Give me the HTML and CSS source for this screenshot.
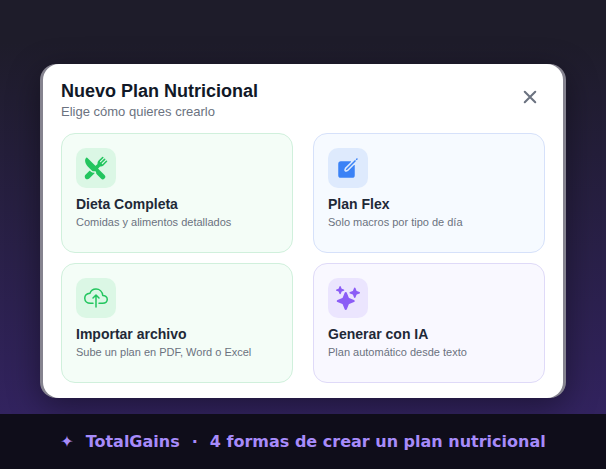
FILE: index.html
```html
<!DOCTYPE html>
<html lang="es">

<head>
    <meta charset="UTF-8">
    <meta name="viewport" content="width=device-width, initial-scale=1.0">
    <title>Nuevo Plan Nutricional</title>
    <link rel="stylesheet" href="styles.css">
</head>

<body>
    <main class="stage">
        <div class="modal-frame">
            <section class="modal" role="dialog" aria-labelledby="modal-title">
                <header class="modal-header">
                    <div>
                        <h1 id="modal-title">Nuevo Plan Nutricional</h1>
                        <p>Elige cómo quieres crearlo</p>
                    </div>
                    <button type="button" class="close" aria-label="Cerrar">
                        <svg viewBox="0 0 512 512"><path class="line thick" d="M368 368L144 144M368 144L144 368"/></svg>
                    </button>
                </header>

                <div class="options">
                    <button type="button" class="option green">
                        <span class="icon">
                            <svg viewBox="0 0 512 512">
                                <path d="M357.57 223.94a79.48 79.48 0 0056.58-23.44l77-76.95c6.09-6.09 6.65-16 .85-22.39a16 16 0 00-23.17-.56l-68.63 68.58a12.29 12.29 0 01-17.37 0c-4.79-4.78-4.53-12.86.25-17.64l68.33-68.33a16 16 0 00-.56-23.16A15.62 15.62 0 00440.27 56a16.71 16.71 0 00-11.81 4.9l-68.27 68.26a12.29 12.29 0 01-17.37 0c-4.78-4.78-4.53-12.86.25-17.64l68.33-68.31a16 16 0 00-.56-23.16A15.62 15.62 0 00400.26 16a16.73 16.73 0 00-11.81 4.9L311.5 97.85a79.49 79.49 0 00-23.44 56.59v8.23a16 16 0 01-4.69 11.33l-35.61 35.62a4 4 0 01-5.66 0L68.82 36.33a16 16 0 00-22.58-.06C31.09 51.28 23 72.47 23 97.54c-.1 41.4 21.66 89 56.79 124.08l85.45 85.45A64.79 64.79 0 00211 326a64 64 0 0016.21-2.08 16.24 16.24 0 014.07-.53 15.93 15.93 0 0110.83 4.25l11.39 10.52a16.12 16.12 0 014.6 11.23v5.54a47.73 47.73 0 0013.77 33.65l90.05 91.57.09.1a53.29 53.29 0 0075.36-75.37L302.39 269.9a4 4 0 010-5.66L338 228.63a16 16 0 0111.32-4.69z"/>
                                <path d="M211 358a97.32 97.32 0 01-68.36-28.25l-13.86-13.86a8 8 0 00-11.3 0l-85 84.56c-15.15 15.15-20.56 37.45-13.06 59.29a30.63 30.63 0 001.49 3.6C31 484 50.58 496 72 496a55.68 55.68 0 0039.64-16.44L225 365.66a4.69 4.69 0 001.32-3.72v-.26a4.63 4.63 0 00-5.15-4.27A97.09 97.09 0 01211 358z"/>
                            </svg>
                        </span>
                        <span class="name">Dieta Completa</span>
                        <span class="text">Comidas y alimentos detallados</span>
                    </button>

                    <button type="button" class="option blue">
                        <span class="icon">
                            <svg viewBox="0 0 512 512">
                                <path d="M459.94 53.25a16.06 16.06 0 00-23.22-.56L424.35 65a8 8 0 000 11.31l11.34 11.32a8 8 0 0011.34 0l12.06-12c6.1-6.09 6.67-16.01.85-22.38zM399.34 90L218.82 270.2a9 9 0 00-2.31 3.93L208.16 299a3.91 3.91 0 004.86 4.86l24.85-8.35a9 9 0 003.93-2.31L422 112.66a9 9 0 000-12.66l-9.95-10a9 9 0 00-12.71 0z"/>
                                <path d="M386.34 193.66L264.45 315.79A41.08 41.08 0 01247.58 326l-25.9 8.67a35.92 35.92 0 01-44.33-44.33l8.67-25.9a41.08 41.08 0 0110.19-16.87l122.13-121.91a8 8 0 00-5.65-13.66H104a56 56 0 00-56 56v240a56 56 0 0056 56h240a56 56 0 0056-56V199.31a8 8 0 00-13.66-5.65z"/>
                            </svg>
                        </span>
                        <span class="name">Plan Flex</span>
                        <span class="text">Solo macros por tipo de día</span>
                    </button>

                    <button type="button" class="option green">
                        <span class="icon">
                            <svg viewBox="0 0 512 512">
                                <path class="line" d="M320 367.79h76c55 0 100-29.21 100-83.6s-53-81.47-96-83.6c-8.89-85.06-71-136.8-144-136.8-69 0-113.44 45.79-128 91.2-60 5.7-112 43.88-112 106.4s54 106.4 120 106.4h56"/>
                                <path class="line" d="M320 255.79l-64-64-64 64M256 448.21V207.79"/>
                            </svg>
                        </span>
                        <span class="name">Importar archivo</span>
                        <span class="text">Sube un plan en PDF, Word o Excel</span>
                    </button>

                    <button type="button" class="option purple">
                        <span class="icon">
                            <svg viewBox="0 0 512 512">
                                <path d="M208 512a24.84 24.84 0 01-23.34-16l-39.84-103.6a16.06 16.06 0 00-9.19-9.19L32 343.34a25 25 0 010-46.68l103.6-39.84a16.06 16.06 0 009.19-9.19L184.66 144a25 25 0 0146.68 0l39.84 103.6a16.06 16.06 0 009.19 9.19l103 39.63a25.49 25.49 0 0116.63 24.1 24.82 24.82 0 01-16 22.82l-103.6 39.84a16.06 16.06 0 00-9.19 9.19L231.34 496A24.84 24.84 0 01208 512z"/>
                                <path d="M88 176a14.67 14.67 0 01-13.69-9.4l-16.86-43.84a7.28 7.28 0 00-4.21-4.21L9.4 101.69a14.67 14.67 0 010-27.38l43.84-16.86a7.31 7.31 0 004.21-4.21L74.16 9.79A15 15 0 0186.23.11a14.67 14.67 0 0115.46 9.29l16.86 43.84a7.31 7.31 0 004.21 4.21l43.84 16.86a14.67 14.67 0 010 27.38l-43.84 16.86a7.28 7.28 0 00-4.21 4.21l-16.86 43.84A14.67 14.67 0 0188 176z"/>
                                <path d="M400 256a16 16 0 01-14.93-10.26l-22.84-59.37a8 8 0 00-4.6-4.6l-59.37-22.84a16 16 0 010-29.86l59.37-22.84a8 8 0 004.6-4.6l22.67-58.95a16.45 16.45 0 0113.17-10.57 16 16 0 0116.86 10.15l22.84 59.37a8 8 0 004.6 4.6l59.37 22.84a16 16 0 010 29.86l-59.37 22.84a8 8 0 00-4.6 4.6l-22.84 59.37A16 16 0 01400 256z"/>
                            </svg>
                        </span>
                        <span class="name">Generar con IA</span>
                        <span class="text">Plan automático desde texto</span>
                    </button>
                </div>
            </section>
        </div>
    </main>

    <footer class="caption">
        <span>✦</span>
        <span>TotalGains</span>
        <span>·</span>
        <span>4 formas de crear un plan nutricional</span>
    </footer>
</body>

</html>
```

FILE: styles.css
```css
* {
    box-sizing: border-box;
}

body {
    margin: 0;
    min-height: 100vh;
    display: flex;
    flex-direction: column;
    background: #0f0d1a;
    font-family: "Liberation Sans", Arial, sans-serif;
}

h1,
p {
    margin: 0;
}

button {
    font-family: inherit;
    cursor: pointer;
}

.stage {
    flex: 1;
    padding: 64px 40px 16px;
    background: linear-gradient(#1e1c2a 10%, #32235f);
}

/* Grey edge that shows at both sides of the white panel */
.modal-frame {
    padding: 0 3px;
    border-radius: 16px;
    background: #85838f;
    box-shadow: 0 8px 32px rgba(0, 0, 0, 0.4);
}

.modal {
    padding: 16px 18px 15px;
    border-radius: 16px;
    background: #fff;
}

.modal-header {
    display: flex;
    justify-content: space-between;
    align-items: flex-start;
    margin-bottom: 11px;
}

.modal-header h1 {
    font-size: 18px;
    line-height: 22px;
    color: #111827;
}

.modal-header p {
    font-size: 13px;
    line-height: 20px;
    color: #6b7280;
}

.close {
    padding: 5px 3px;
    border: none;
    background: none;
    color: #6b7280;
}

svg {
    display: block;
    width: 24px;
    height: 24px;
    fill: currentColor;
}

.line {
    fill: none;
    stroke: currentColor;
    stroke-width: 32;
    stroke-linecap: round;
    stroke-linejoin: round;
}

.thick {
    stroke-width: 44;
}

/* Plan options */
.options {
    display: grid;
    grid-template-columns: 1fr 1fr;
    gap: 10px 20px;
}

.option {
    display: flex;
    flex-direction: column;
    align-items: flex-start;
    min-height: 120px;
    padding: 14px;
    border: 1px solid;
    border-radius: 14px;
    text-align: left;
}

.icon {
    padding: 8px;
    border-radius: 10px;
    margin-bottom: 7px;
}

.name {
    font-size: 14px;
    font-weight: bold;
    line-height: 18px;
    color: #1f2937;
}

.text {
    font-size: 11px;
    line-height: 18px;
    color: #6b7280;
}

.green {
    background: #f4fdf7;
    border-color: #d0f0dc;
}

.green .icon {
    background: #dbf7e5;
    color: #22c55e;
}

.blue {
    background: #f6faff;
    border-color: #d6e1fa;
}

.blue .icon {
    background: #deeafd;
    color: #3b82f6;
}

.purple {
    background: #f9f8ff;
    border-color: #dfdaf8;
}

.purple .icon {
    background: #ebe5fe;
    color: #8b5cf6;
}

.caption {
    display: flex;
    flex-wrap: wrap;
    justify-content: center;
    gap: 0 12px;
    padding: 16px;
    background: #0f0d1a;
    color: #a78bfa;
    font-family: "DejaVu Sans", sans-serif;
    font-size: 16px;
    font-weight: bold;
    line-height: 23px;
}
```
